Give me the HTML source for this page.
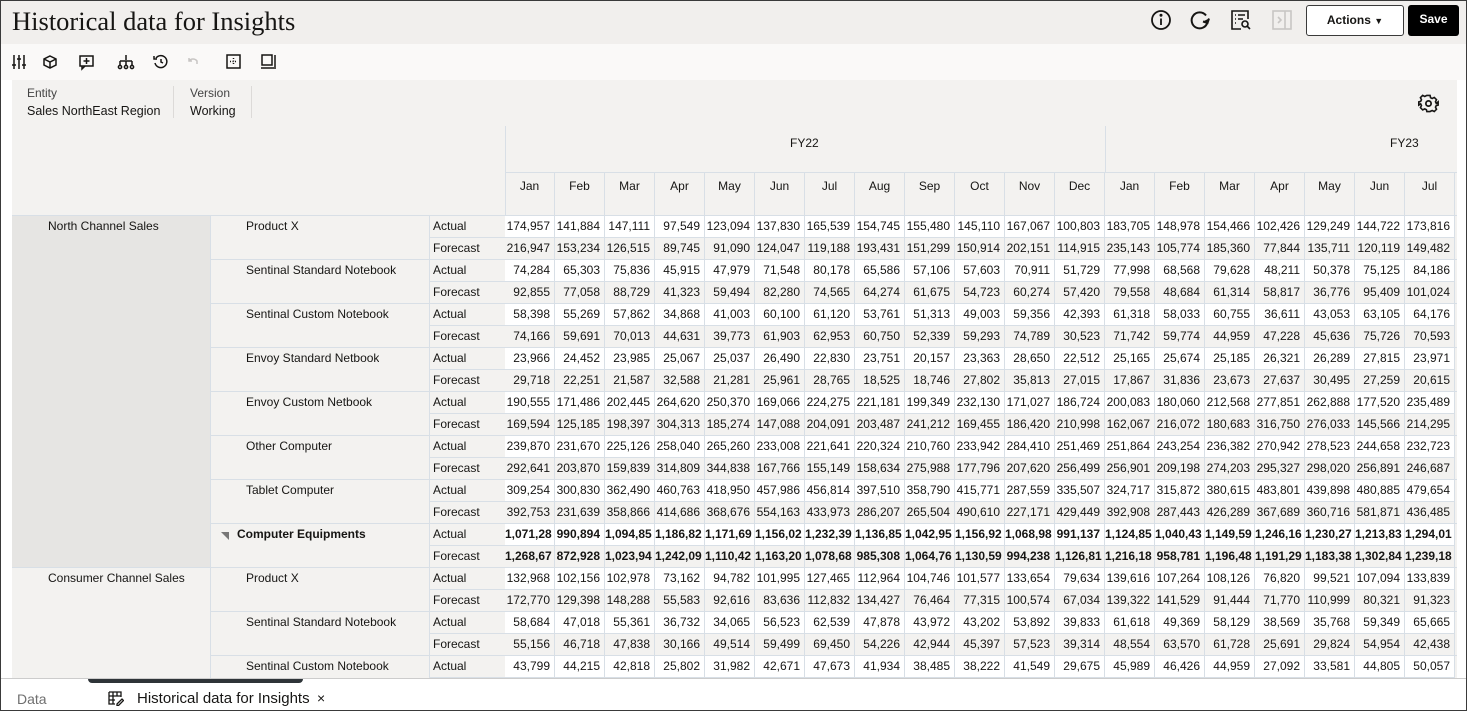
<!DOCTYPE html>
<html><head><meta charset="utf-8"><style>
*{box-sizing:border-box;margin:0;padding:0}
body{width:1467px;height:711px;overflow:hidden;background:#fff;font-family:"Liberation Sans",sans-serif;color:#161513;position:relative}
.frame{position:absolute;left:0;top:0;width:1467px;height:711px;border:1px solid #3a3a3a;pointer-events:none;z-index:50}
.abs{position:absolute}
.title{left:0;top:0;width:1467px;height:44px;background:#f1efed}
.title h1{position:absolute;left:12px;top:6px;font-family:"Liberation Serif",serif;font-weight:normal;font-size:26.5px;color:#161513}
.tb{left:0;top:44px;width:1467px;height:36px;background:#faf9f8}
.pov{left:12px;top:80px;width:1445px;height:46px;background:#f3f2f0;font-size:12px}
.grid{left:12px;top:126px;width:1445px;height:552px;overflow:hidden;background:#f3f2f0}
.c{position:absolute;font-size:12px;white-space:nowrap;overflow:hidden}
.n{text-align:right;padding-right:4px;line-height:21px;border-right:1px solid #d8dfe6;border-bottom:1px solid #d8dfe6}
.btn{position:absolute;top:5px;height:31px;border-radius:3px;font-size:12px;font-weight:bold;line-height:29px;text-align:center}
</style></head><body>
<div class="frame"></div>
<div class="abs title"><h1>Historical data for Insights</h1>
<svg class="abs" style="left:1150px;top:9px" width="22" height="22" viewBox="0 0 22 22" fill="none" stroke="#161513" stroke-width="1.8"><circle cx="11" cy="11" r="9"/><line x1="11" y1="9.5" x2="11" y2="16"/><circle cx="11" cy="6.3" r=".6" fill="#161513"/></svg>
<svg class="abs" style="left:1189px;top:9px" width="22" height="22" viewBox="0 0 22 22" fill="none" stroke="#161513" stroke-width="2"><path d="M17 6.5A8 8 0 1 0 18.5 13"/><path d="M14 12.5l4.5 1.5 1.5-4.5" fill="#161513"/></svg>
<svg class="abs" style="left:1230px;top:9px" width="22" height="22" viewBox="0 0 22 22" fill="none" stroke="#161513" stroke-width="1.6"><path d="M11 20H2V2h16v8"/><path d="M5 6h1M8 6h7M5 10h1M8 10h5M5 14h1"/><circle cx="15" cy="15" r="3"/><path d="M17 17l3 3"/></svg>
<svg class="abs" style="left:1271px;top:9px" width="22" height="22" viewBox="0 0 22 22" fill="none" stroke="#c8c6c4" stroke-width="1.6"><rect x="2" y="2" width="18" height="18"/><path d="M14 2v18M7 8l3 3-3 3"/></svg>
<div class="btn" style="left:1306px;width:98px;border:1px solid #3a3a3a;background:#fff">Actions <span style="font-size:9px">&#9660;</span></div>
<div class="btn" style="left:1408px;width:51px;background:#000;color:#fff">Save</div>
</div>
<div class="abs tb">
<svg class="abs" style="left:12px;top:9px" width="220" height="18" viewBox="0 0 220 18" fill="none" stroke="#161513" stroke-width="1.5">
<path d="M2 2v14M7 2v14M12 2v14M0 12h4M5 6h4M10 12h4"/>
<path d="M38 3l6 3v6l-6 3-6-3V6zM32 6l6 3 6-3M38 9v6"/>
<rect x="68" y="3" width="13" height="10"/><path d="M70 13v3l3-3M74.5 5v6M71.5 8h6"/>
<path d="M114 2v5M108 8h12M108 8v4M114 8v4M120 8v4"/><circle cx="108" cy="14" r="1.6"/><circle cx="114" cy="14" r="1.6"/><circle cx="120" cy="14" r="1.6"/>
<path d="M144 5a6 6 0 1 1-1 5"/><path d="M142 3v3h3M149 6v3l2 1"/>
<path d="M177 8a5 5 0 0 1 8 0v3M177 5v3h3" stroke="#c8c6c4"/>
</svg>
<svg class="abs" style="left:225px;top:9px" width="60" height="18" viewBox="0 0 60 18" fill="none" stroke="#161513" stroke-width="1.5"><rect x="2" y="2" width="13" height="13"/><path d="M8.5 5v7M5 8.5h7" stroke-dasharray="1 1.5"/><rect x="37" y="2" width="10" height="10"/><path d="M36 15h13M50 2v14"/></svg>
</div>
<div class="abs pov">
<div class="c" style="left:15px;top:6px;color:#444">Entity</div>
<div class="c" style="left:15px;top:24px;font-size:12.5px">Sales NorthEast Region</div>
<div class="abs" style="left:161px;top:6px;width:1px;height:32px;background:#dcdad8"></div>
<div class="c" style="left:178px;top:6px;color:#444">Version</div>
<div class="c" style="left:178px;top:24px;font-size:12.5px">Working</div>
<div class="abs" style="left:239px;top:6px;width:1px;height:32px;background:#dcdad8"></div>
<svg class="abs" style="left:1406px;top:13px" width="21" height="21" viewBox="0 0 24 24" fill="none" stroke="#161513" stroke-width="2"><circle cx="12" cy="12" r="3"/><path d="M10 2h4l.6 2.8 2 1 2.6-1.3 2.8 2.8-1.3 2.6 1 2L24 10v4l-2.3.6-1 2 1.3 2.6-2.8 2.8-2.6-1.3-2 1L14 22h-4l-.6-2.3-2-1-2.6 1.3-2.8-2.8 1.3-2.6-1-2L0 14v-4l2.3-.6 1-2L2 4.8 4.8 2l2.6 1.3 2-1z" transform="scale(.92) translate(1 1)"/></svg>
</div>
<div class="abs grid" id="g"></div>
<div class="abs" style="left:0;top:678px;width:1467px;height:33px;background:#fff;border-top:1px solid #ccc">
<div class="abs" style="left:88px;top:0;width:215px;height:4px;background:#2e3438;border-radius:0 0 4px 4px"></div>
<div class="c" style="left:17px;top:12px;font-size:14px;color:#6f6f6f">Data</div>
<svg class="abs" style="left:108px;top:12px" width="16" height="15" viewBox="0 0 16 15" fill="none" stroke="#161513" stroke-width="1.3"><path d="M1 1h12v5M1 1v12h6M1 5h12M1 9h6M5 1v12M9 1v4"/><path d="M9 13l5-5 1.5 1.5-5 5H9z"/></svg>
<div class="c" style="left:137px;top:11px;font-size:15px">Historical data for Insights</div>
<div class="c" style="left:317px;top:11px;font-size:14px">&#215;</div>
</div>
<script>
var D=[
["Product X","174,957 141,884 147,111 97,549 123,094 137,830 165,539 154,745 155,480 145,110 167,067 100,803 183,705 148,978 154,466 102,426 129,249 144,722 173,816","216,947 153,234 126,515 89,745 91,090 124,047 119,188 193,431 151,299 150,914 202,151 114,915 235,143 105,774 185,360 77,844 135,711 120,119 149,482"],
["Sentinal Standard Notebook","74,284 65,303 75,836 45,915 47,979 71,548 80,178 65,586 57,106 57,603 70,911 51,729 77,998 68,568 79,628 48,211 50,378 75,125 84,186","92,855 77,058 88,729 41,323 59,494 82,280 74,565 64,274 61,675 54,723 60,274 57,420 79,558 48,684 61,314 58,817 36,776 95,409 101,024"],
["Sentinal Custom Notebook","58,398 55,269 57,862 34,868 41,003 60,100 61,120 53,761 51,313 49,003 59,356 42,393 61,318 58,033 60,755 36,611 43,053 63,105 64,176","74,166 59,691 70,013 44,631 39,773 61,903 62,953 60,750 52,339 59,293 74,789 30,523 71,742 59,774 44,959 47,228 45,636 75,726 70,593"],
["Envoy Standard Netbook","23,966 24,452 23,985 25,067 25,037 26,490 22,830 23,751 20,157 23,363 28,650 22,512 25,165 25,674 25,185 26,321 26,289 27,815 23,971","29,718 22,251 21,587 32,588 21,281 25,961 28,765 18,525 18,746 27,802 35,813 27,015 17,867 31,836 23,673 27,637 30,495 27,259 20,615"],
["Envoy Custom Netbook","190,555 171,486 202,445 264,620 250,370 169,066 224,275 221,181 199,349 232,130 171,027 186,724 200,083 180,060 212,568 277,851 262,888 177,520 235,489","169,594 125,185 198,397 304,313 185,274 147,088 204,091 203,487 241,212 169,455 186,420 210,998 162,067 216,072 180,683 316,750 276,033 145,566 214,295"],
["Other Computer","239,870 231,670 225,126 258,040 265,260 233,008 221,641 220,324 210,760 233,942 284,410 251,469 251,864 243,254 236,382 270,942 278,523 244,658 232,723","292,641 203,870 159,839 314,809 344,838 167,766 155,149 158,634 275,988 177,796 207,620 256,499 256,901 209,198 274,203 295,327 298,020 256,891 246,687"],
["Tablet Computer","309,254 300,830 362,490 460,763 418,950 457,986 456,814 397,510 358,790 415,771 287,559 335,507 324,717 315,872 380,615 483,801 439,898 480,885 479,654","392,753 231,639 358,866 414,686 368,676 554,163 433,973 286,207 265,504 490,610 227,171 429,449 392,908 287,443 426,289 367,689 360,716 581,871 436,485"],
["Computer Equipments","1,071,28 990,894 1,094,85 1,186,82 1,171,69 1,156,02 1,232,39 1,136,85 1,042,95 1,156,92 1,068,98 991,137 1,124,85 1,040,43 1,149,59 1,246,16 1,230,27 1,213,83 1,294,01","1,268,67 872,928 1,023,94 1,242,09 1,110,42 1,163,20 1,078,68 985,308 1,064,76 1,130,59 994,238 1,126,81 1,216,18 958,781 1,196,48 1,191,29 1,183,38 1,302,84 1,239,18",1],
["Product X","132,968 102,156 102,978 73,162 94,782 101,995 127,465 112,964 104,746 101,577 133,654 79,634 139,616 107,264 108,126 76,820 99,521 107,094 133,839","172,770 129,398 148,288 55,583 92,616 83,636 112,832 134,427 76,464 77,315 100,574 67,034 139,322 141,529 91,444 71,770 110,999 80,321 91,323"],
["Sentinal Standard Notebook","58,684 47,018 55,361 36,732 34,065 56,523 62,539 47,878 43,972 43,202 53,892 39,833 61,618 49,369 58,129 38,569 35,768 59,349 65,665","55,156 46,718 47,838 30,166 49,514 59,499 69,450 54,226 42,944 45,397 57,523 39,314 48,554 63,570 61,728 25,691 29,824 54,954 42,438"],
["Sentinal Custom Notebook","43,799 44,215 42,818 25,802 31,982 42,671 47,673 41,934 38,485 38,222 41,549 29,675 45,989 46,426 44,959 27,092 33,581 44,805 50,057","-"]
];
var h='',L='#d8dfe6';
var M=['Jan','Feb','Mar','Apr','May','Jun','Jul','Aug','Sep','Oct','Nov','Dec'];
h+='<div class="abs" style="left:493px;top:0;width:1px;height:89px;background:'+L+'"></div>';
h+='<div class="abs" style="left:1093px;top:0;width:1px;height:46px;background:'+L+'"></div>';
h+='<div class="abs" style="left:493px;top:46px;width:960px;height:1px;background:'+L+'"></div>';
h+='<div class="c" style="left:778px;top:10px">FY22</div><div class="c" style="left:1378px;top:10px">FY23</div>';
for(var i=0;i<19;i++){var x=493+i*50;h+='<div class="c" style="left:'+x+'px;top:46px;width:50px;height:43px;border-right:1px solid '+L+';text-align:center;padding-top:7px">'+M[i%12]+'</div>';}
h+='<div class="abs" style="left:0;top:89px;width:1445px;height:1px;background:'+L+'"></div>';
h+='<div class="abs" style="left:0;top:90px;width:198px;height:352px;background:#e6e5e3"></div>';
h+='<div class="abs" style="left:0;top:441px;width:1445px;height:1px;background:'+L+'"></div>';
h+='<div class="c" style="left:36px;top:93px">North Channel Sales</div>';
h+='<div class="c" style="left:36px;top:445px">Consumer Channel Sales</div>';
h+='<div class="abs" style="left:198px;top:90px;width:1px;height:470px;background:'+L+'"></div>';
h+='<div class="abs" style="left:417px;top:90px;width:1px;height:470px;background:'+L+'"></div>';
for(var r=0;r<D.length;r++){var d=D[r];var y0=90+r*44;if(r>=8)y0=442+(r-8)*44;
 if(d[3])h+='<svg class="abs" style="left:209px;top:'+(y0+8)+'px" width="8" height="8" viewBox="0 0 8 8"><path d="M0 0h8L8 8z" fill="#777" transform="rotate(0)"/></svg>';
 h+='<div class="c" style="left:'+(d[3]?225:234)+'px;top:'+(y0+3)+'px;'+(d[3]?'font-weight:bold':'')+'">'+d[0]+'</div>';
 h+='<div class="abs" style="left:198px;top:'+(y0+43)+'px;width:1247px;height:1px;background:'+L+'"></div>';
 for(var k=0;k<2;k++){var vals=d[1+k];if(vals=='-')continue;var yy=y0+k*22;
  h+='<div class="c" style="left:421px;top:'+(yy+3)+'px">'+(k?'Forecast':'Actual')+'</div>';
  h+='<div class="abs" style="left:417px;top:'+(yy+21)+'px;width:76px;height:1px;background:'+L+'"></div>';
  var v=vals.split(' ');
  for(var i=0;i<19;i++)h+='<div class="c n" style="left:'+(493+i*50)+'px;top:'+yy+'px;width:50px;height:22px;background:'+(k?'#f3f2f0':'#fff')+';'+(d[3]?'font-weight:bold;':'')+'">'+v[i]+'</div>';
 }}
document.getElementById('g').innerHTML=h;
</script>
</body></html>
